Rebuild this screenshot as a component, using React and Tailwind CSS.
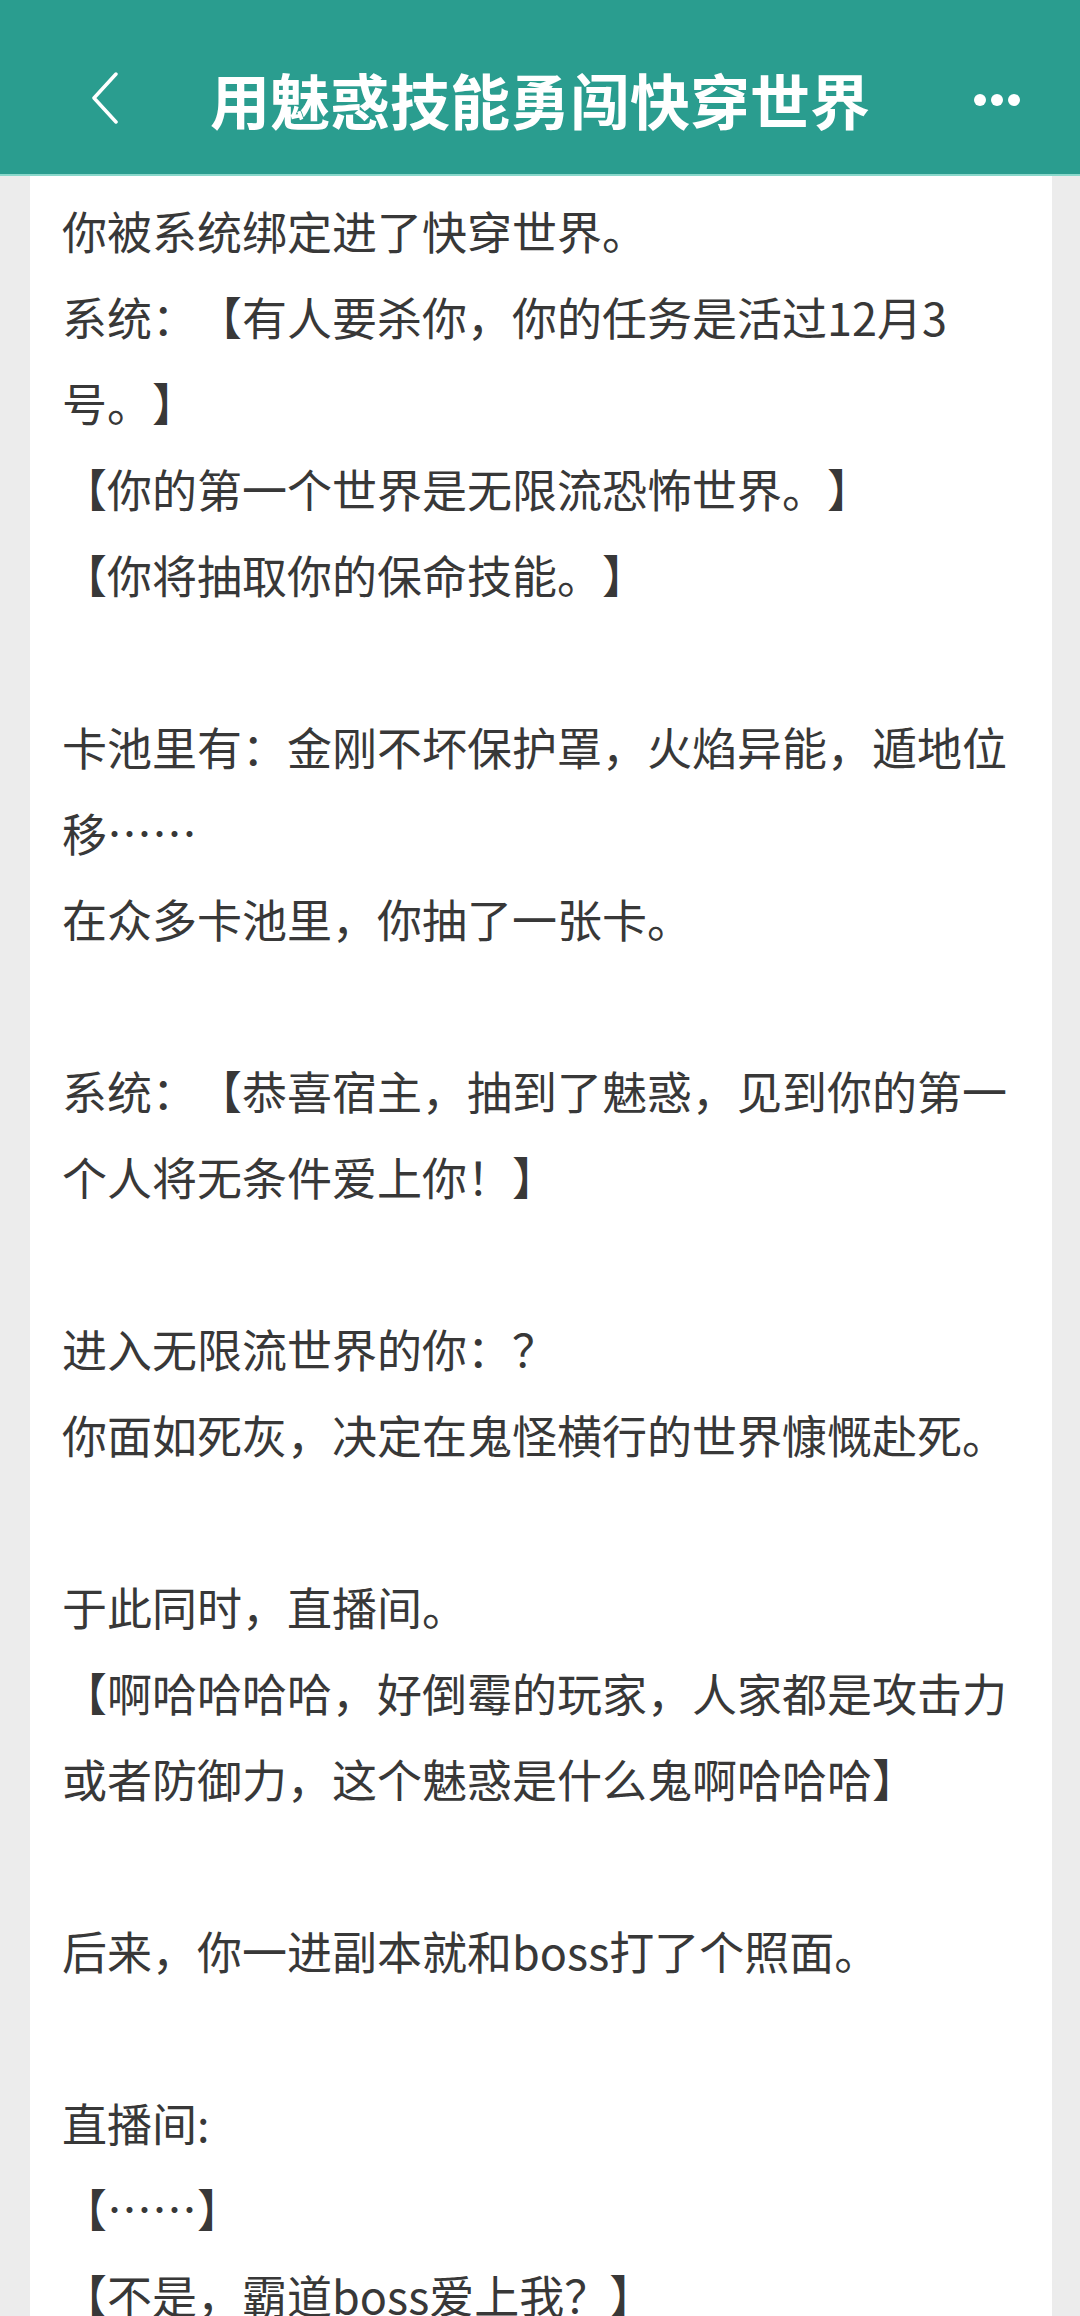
import React from 'react';

const lines = [
  '你被系统绑定进了快穿世界。',
  '系统：【有人要杀你，你的任务是活过12月3号。】',
  '【你的第一个世界是无限流恐怖世界。】',
  '【你将抽取你的保命技能。】',
  '',
  '卡池里有：金刚不坏保护罩，火焰异能，遁地位移……',
  '在众多卡池里，你抽了一张卡。',
  '',
  '系统：【恭喜宿主，抽到了魅惑，见到你的第一个人将无条件爱上你！】',
  '',
  '进入无限流世界的你：？',
  '你面如死灰，决定在鬼怪横行的世界慷慨赴死。',
  '',
  '于此同时，直播间。',
  '【啊哈哈哈哈，好倒霉的玩家，人家都是攻击力或者防御力，这个魅惑是什么鬼啊哈哈哈】',
  '',
  '后来，你一进副本就和boss打了个照面。',
  '',
  '直播间:',
  '【……】',
  '【不是，霸道boss爱上我？】',
];

const App = () => {
  return (
    <div className="w-[1080px] h-[2316px] overflow-hidden bg-[#ececec] font-['Noto_Sans_CJK_SC','Noto_Sans',sans-serif]">
      {/* top bar */}
      <div className="h-[176px] bg-[#2a9d8f] border-b-2 border-[#8ad8cb] flex items-center pt-[24px] px-[90px] relative">
        <svg width="28" height="52" viewBox="0 0 28 52" className="absolute left-[91px] top-[72px]" fill="none">
          <path d="M25 2 L3 26 L25 50" stroke="#ffffff" strokeWidth="3.5" strokeLinecap="round" strokeLinejoin="round" />
        </svg>
        <h1 className="flex-1 text-center text-white font-bold text-[60px] leading-none">
          用魅惑技能勇闯快穿世界
        </h1>
        <div className="absolute left-[974px] top-[94px] flex gap-[5px]">
          <span className="w-[12px] h-[12px] rounded-full bg-white" />
          <span className="w-[12px] h-[12px] rounded-full bg-white" />
          <span className="w-[12px] h-[12px] rounded-full bg-white" />
        </div>
      </div>

      {/* reading panel */}
      <div className="ml-[30px] mr-[28px] bg-white min-h-[2140px] pl-[32px] pr-[32px] pt-[12px] text-[45px] leading-[86px] text-[#383838] [text-spacing-trim:space-all]">
        {lines.map((t, i) =>
          t === '' ? (
            <div key={i} className="h-[86px]" />
          ) : (
            <p key={i}>{t}</p>
          )
        )}
      </div>
    </div>
  );
};

export default App;
